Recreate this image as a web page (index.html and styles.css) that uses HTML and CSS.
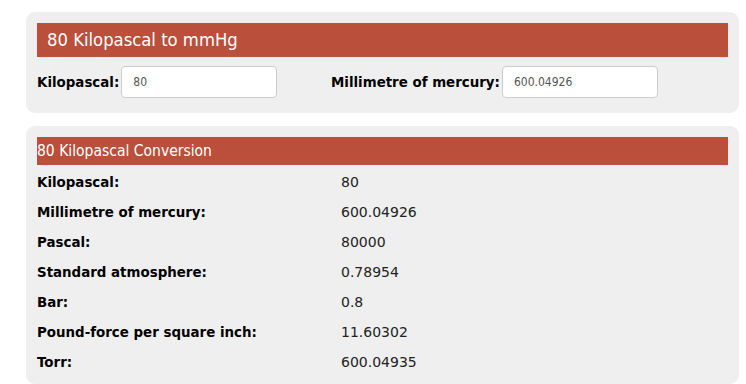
FILE: index.html
```html
<!DOCTYPE html>
<html>
<head>
<meta charset="utf-8">
<link rel="stylesheet" href="styles.css">
</head>
<body>
<div class="page">
  <section class="card card-form">
    <h1 class="bar bar-title">80 Kilopascal to mmHg</h1>
    <div class="fields">
      <label class="field"><span class="field-label">Kilopascal:</span><input class="field-input" type="text" value="80"></label>
      <label class="field"><span class="field-label">Millimetre of mercury:</span><input class="field-input" type="text" value="600.04926"></label>
    </div>
  </section>
  <section class="card card-table">
    <h2 class="bar bar-sub">80 Kilopascal Conversion</h2>
    <div class="rows">
      <div class="row"><span class="row-label">Kilopascal:</span><span class="row-value">80</span></div>
      <div class="row"><span class="row-label">Millimetre of mercury:</span><span class="row-value">600.04926</span></div>
      <div class="row"><span class="row-label">Pascal:</span><span class="row-value">80000</span></div>
      <div class="row"><span class="row-label">Standard atmosphere:</span><span class="row-value">0.78954</span></div>
      <div class="row"><span class="row-label">Bar:</span><span class="row-value">0.8</span></div>
      <div class="row"><span class="row-label">Pound-force per square inch:</span><span class="row-value">11.60302</span></div>
      <div class="row"><span class="row-label">Torr:</span><span class="row-value">600.04935</span></div>
    </div>
  </section>
</div>
</body>
</html>
```
FILE: styles.css
```css
html, body {
  margin: 0;
  padding: 0;
  background: #ffffff;
}
body {
  font-family: "DejaVu Sans", Verdana, sans-serif;
  font-size: 13px;
  color: #111;
}
.page {
  padding: 12px 7px 0 26px;
  display: flex;
  flex-direction: column;
  gap: 13px;
}
.card {
  background: #efefef;
  border-radius: 9px;
  padding: 11px 11px 0 11px;
}
.card-form {
  height: 90px;
}
.card-table {
  padding-bottom: 7px;
}
.bar {
  margin: 0;
  background: #ba4f3c;
  color: #ffffff;
  font-family: "DejaVu Sans Condensed", "DejaVu Sans", sans-serif;
  font-stretch: condensed;
  font-weight: normal;
}
.bar-title {
  height: 34px;
  line-height: 34px;
  font-size: 18.3px;
  padding-left: 10px;
}
.bar-sub {
  height: 28px;
  line-height: 28px;
  font-size: 15.5px;
  padding-left: 0;
}
.fields {
  display: grid;
  grid-template-columns: 294px 1fr;
  margin-top: 9px;
}
.field {
  display: flex;
  align-items: center;
  gap: 2px;
}
.field-label {
  font-weight: bold;
  font-size: 13.4px;
  color: #000;
}
.field-input {
  box-sizing: border-box;
  width: 156px;
  height: 32px;
  border: 1px solid #cccccc;
  border-radius: 4px;
  background: #ffffff;
  padding: 0 11px;
  font-family: "DejaVu Sans Condensed", "DejaVu Sans", sans-serif;
  font-stretch: condensed;
  font-size: 12px;
  color: #555;
  outline: none;
}
.rows {
  padding-top: 2px;
}
.row {
  display: grid;
  grid-template-columns: 304px 1fr;
  height: 30px;
  align-items: center;
}
.row-label {
  font-weight: bold;
  font-size: 13.4px;
  color: #000;
}
.row-value {
  font-size: 14px;
  color: #222;
}
```
